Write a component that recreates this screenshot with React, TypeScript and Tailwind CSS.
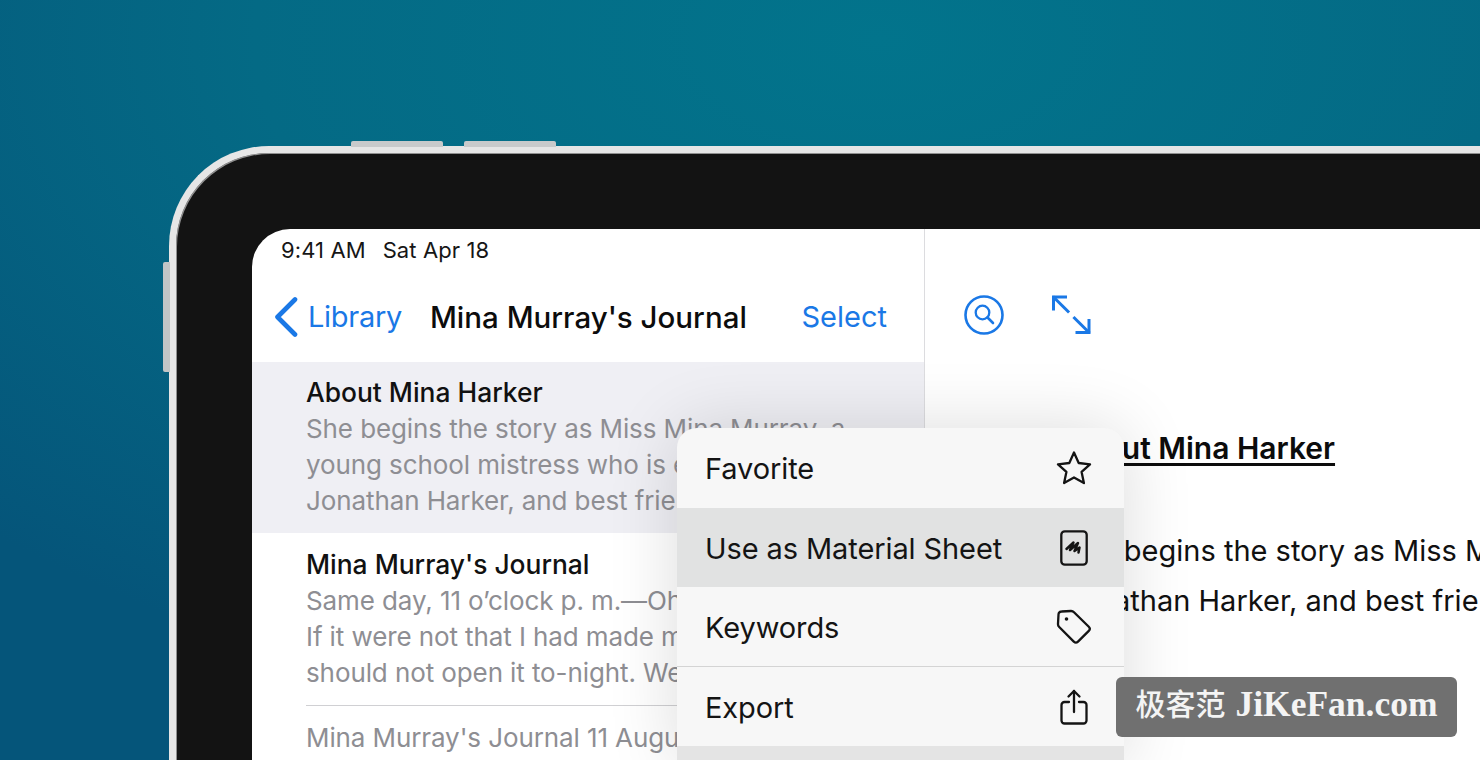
const noteRows = [
  {
    title: "About Mina Harker",
    lines: ["She begins the story as Miss Mina Murray, a", "young school mistress who is engaged to", "Jonathan Harker, and best friend of Lucy"],
  },
  {
    title: "Mina Murray's Journal",
    lines: ["Same day, 11 o’clock p. m.—Oh, but I am", "If it were not that I had made my diary a", "should not open it to-night. We had a"],
  },
];

function Chevron() {
  return (
    <svg width="24" height="40" viewBox="0 0 24 40" fill="none" stroke="#1a78e6" strokeWidth="4.600" strokeLinecap="round" strokeLinejoin="round">
      <path d="M21 2.500 3.500 20 21 37.500" />
    </svg>
  );
}

function SearchCircle() {
  return (
    <svg width="40" height="40" viewBox="0 0 40 40" fill="none" stroke="#1a78e6" strokeLinecap="round">
      <circle cx="20" cy="20" r="18.500" strokeWidth="2.600" />
      <circle cx="18.500" cy="17.500" r="6.800" strokeWidth="2.300" />
      <path d="m23.500 22.500 5.500 5.500" strokeWidth="2.600" />
    </svg>
  );
}

function ExpandArrows() {
  return (
    <svg width="40" height="40" viewBox="0 0 40 40" fill="none" stroke="#1a78e6" strokeWidth="3" strokeLinecap="square">
      <path d="M2.500 14V2h12" />
      <path d="m3 2.500 14 14" />
      <path d="M38 25.500V37.500H26" />
      <path d="M37.500 37 23.500 23" />
    </svg>
  );
}

function StarIcon() {
  return (
    <svg width="36" height="34" viewBox="0 0 36 34" fill="none" stroke="#141414" strokeWidth="2.300" strokeLinejoin="round">
      <path d="m18 1.500 4.700 10.500 11.300 1.300-8.400 7.600 2.300 11.100L18 26.400 8.100 32l2.300-11.100L2 13.300l11.300-1.300z" />
    </svg>
  );
}

function SheetIcon() {
  return (
    <svg width="28" height="36" viewBox="0 0 28 36" fill="none" stroke="#141414">
      <rect x="1.300" y="1.300" width="25.400" height="33.400" rx="3.500" strokeWidth="2.300" />
      <path d="m6.500 19 7-6.500-3.500 7.500 8-7-3.500 8 5-3.500-1 5" strokeWidth="2.500" strokeLinecap="round" strokeLinejoin="round" />
    </svg>
  );
}

function TagIcon() {
  return (
    <svg width="36" height="36" viewBox="0 0 36 36" fill="none" stroke="#141414" strokeWidth="2.300" strokeLinejoin="round">
      <path d="M2.500 5.500a3 3 0 0 1 3-3l9.500-.500a4 4 0 0 1 3 1.200l14.800 14.500a3 3 0 0 1 0 4.200L22 32.600a3 3 0 0 1-4.200 0L3.200 18a4 4 0 0 1-1.200-3z" />
      <circle cx="10.500" cy="10" r="1.800" fill="#141414" stroke="none" />
    </svg>
  );
}

function ShareIcon() {
  return (
    <svg width="28" height="36" viewBox="0 0 28 36" fill="none" stroke="#141414" strokeWidth="2.300" strokeLinecap="round" strokeLinejoin="round">
      <path d="M9 13H4.500a3 3 0 0 0-3 3v15.500a3 3 0 0 0 3 3h19a3 3 0 0 0 3-3V16a3 3 0 0 0-3-3H19" />
      <path d="M14 23V2" />
      <path d="m8.500 7.500 5.500-5.500 5.500 5.500" />
    </svg>
  );
}

function MenuRow({ label, icon, className }: { label: string; icon: React.ReactNode; className: string }) {
  return (
    <div className={`flex items-center justify-between pl-[28px] pr-[32px] ${className}`}>
      <span className="block pt-[2px] text-[29px] tracking-[-0.1px] text-[#141414]">{label}</span>
      <span className="flex w-[36px] justify-center">{icon}</span>
    </div>
  );
}

export default function App() {
  return (
    <div
      className="relative h-[760px] w-[1480px] overflow-hidden bg-[#04607f] bg-[radial-gradient(ellipse_1250px_700px_at_880px_40px,#02748c_0%,#046a85_50%,#05557a_100%)] pl-[169px] pt-[146px]"
      style={{ fontFamily: 'Inter, "Noto Sans", sans-serif' }}
    >
      <div className="relative w-[1400px]">
        {/* hardware buttons */}
        <div className="absolute left-[182px] top-[-5px] h-[6px] w-[92px] rounded-t-[2px] bg-[#c8cacb]" />
        <div className="absolute left-[295px] top-[-5px] h-[6px] w-[92px] rounded-t-[2px] bg-[#c8cacb]" />
        <div className="absolute left-[-6px] top-[116px] h-[110px] w-[7px] rounded-l-[2px] bg-[#c2c5c6]" />

        <div className="h-[640px] rounded-tl-[100px] border-l-[7px] border-t-[7px] border-[#e6e6e6] bg-[#131313] pl-[76px] pt-[76px] shadow-[inset_1px_1px_0_#8f8f8f]">
          <div className="flex h-[560px] overflow-hidden rounded-tl-[38px] bg-white">
            <div className="w-[673px] shrink-0 border-r border-[#dcdcdf]">
              <div className="h-[133px]">
                <div className="flex h-[42px] items-center gap-[17px] pl-[29px] text-[22px] tracking-[0.1px] text-[#161616]">
                  <span>9:41 AM</span>
                  <span>Sat Apr 18</span>
                </div>
                <div className="mt-[21px] flex h-[50px] items-center pl-[22px] pr-[37px] text-[29px]">
                  <Chevron />
                  <span className="ml-[10px] tracking-[-0.3px] text-[#1a78e6]">Library</span>
                  <span className="ml-[28px] text-[29.500px] font-medium text-[#0c0c0c]">Mina Murray's Journal</span>
                  <span className="ml-auto text-[#1a78e6]">Select</span>
                </div>
              </div>
              {noteRows.map((row, i) => (
                <div key={row.title} className={i === 0 ? "h-[171px] bg-[#efeff4] pl-[54px] pt-[12px]" : "h-[172px] pl-[54px] pt-[13px]"}>
                  <div className="h-[37px] text-[26.400px] font-medium leading-[36px] text-[#111111]">{row.title}</div>
                  {row.lines.map((line) => (
                    <div key={line} className="whitespace-nowrap text-[26px] leading-[36px] tracking-[-0.1px] text-[#8e8e93]">
                      {line}
                    </div>
                  ))}
                </div>
              ))}
              <div className="pl-[54px]">
                <div className="whitespace-nowrap border-t border-[#d0d0d3] pt-[14px] text-[26px] leading-[36px] tracking-[-0.1px] text-[#8e8e93]">
                  Mina Murray's Journal 11 August
                </div>
              </div>
            </div>

            <div className="min-w-0 flex-1 pt-[66px]">
              <div className="flex items-center gap-[47px] pl-[39px]">
                <SearchCircle />
                <ExpandArrows />
              </div>
              <div className="pl-[138px]">
                <div className="mt-[93px] whitespace-nowrap text-[30px] font-semibold leading-[41px] text-[#0c0c0c] underline underline-offset-[4px]">
                  About Mina Harker
                </div>
                <div className="mt-[57px] whitespace-nowrap text-[29px] leading-[50px] text-[#111111]">She begins the story as Miss Mina Murray</div>
                <div className="whitespace-nowrap text-[29px] leading-[50px] text-[#111111]">Jonathan Harker, and best friend of Lucy</div>
              </div>
            </div>
          </div>
        </div>
      </div>

      {/* context menu */}
      <div className="absolute left-[677px] top-[428px] w-[447px] overflow-hidden rounded-t-[20px] bg-[#f7f7f7] shadow-[0_0_70px_rgba(0,0,0,0.14)]">
        <MenuRow label="Favorite" icon={<StarIcon />} className="h-[80px]" />
        <MenuRow label="Use as Material Sheet" icon={<SheetIcon />} className="h-[79px] bg-[#e1e2e2] pt-px" />
        <MenuRow label="Keywords" icon={<TagIcon />} className="h-[80px] border-b border-[#d4d4d4] pt-px" />
        <MenuRow label="Export" icon={<ShareIcon />} className="h-[79px] pt-px" />
        <div className="h-[20px] bg-[#e4e4e4]" />
      </div>

      {/* watermark */}
      <div
        className="absolute left-[1116px] top-[677px] flex h-[60px] w-[341px] items-center justify-center gap-[10px] whitespace-nowrap rounded-[6px] bg-[#707070] pb-[5px] font-bold text-[#f4f4f4]"
        style={{ fontFamily: '"Liberation Serif", "Noto Sans CJK SC", serif' }}
      >
        <span className="text-[30px] font-medium">极客范</span>
        <span className="text-[35.500px]">JiKeFan.com</span>
      </div>
    </div>
  );
}
